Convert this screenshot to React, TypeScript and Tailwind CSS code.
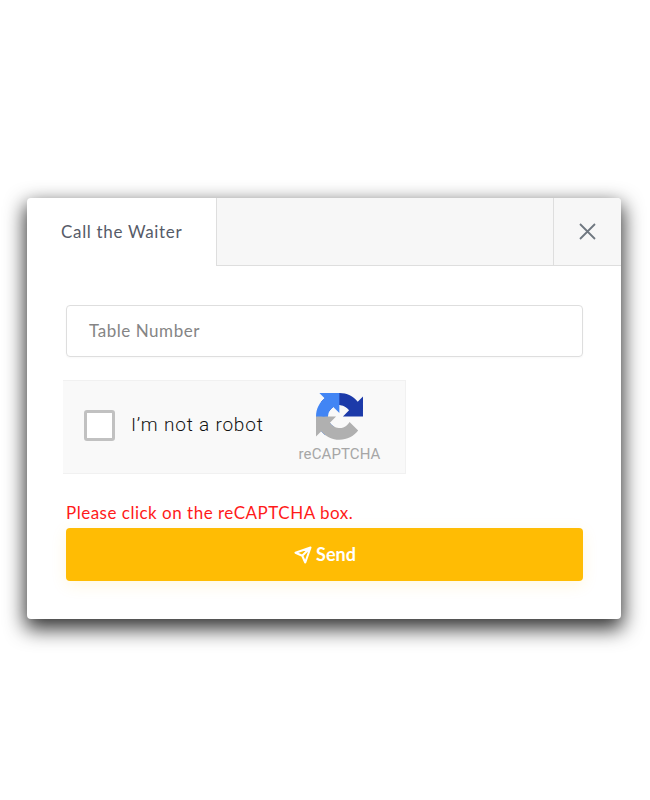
// reCAPTCHA widget mark
function RecaptchaLogo() {
  return (
    <svg className="w-[47px] h-[47px]" viewBox="0 0 64 64">
      <path d="M64 31.955l-.033-1.37V4.687l-7.16 7.16C50.948 4.674 42.033.093 32.05.093c-10.4 0-19.622 4.96-25.458 12.64l11.736 11.86a15.55 15.55 0 0 1 4.754-5.334c2.05-1.6 4.952-2.906 8.968-2.906.485 0 .86.057 1.135.163 4.976.393 9.29 3.14 11.83 7.124l-8.307 8.307c10.522-.04 22.4-.066 27.295.006" fill="#1c3aa9" />
      <path d="M31.862.001l-1.37.033H4.594l7.16 7.16C4.58 13.053 0 21.968 0 31.95c0 10.4 4.96 19.622 12.64 25.458L24.5 45.672a15.55 15.55 0 0 1-5.334-4.754c-1.6-2.05-2.906-4.952-2.906-8.968 0-.485.057-.86.163-1.135.393-4.976 3.14-9.29 7.124-11.83l8.307 8.307c-.04-10.522-.066-22.4.006-27.295" fill="#4285f4" />
      <path d="M.001 31.95l.033 1.37v25.898l7.16-7.16c5.86 7.173 14.775 11.754 24.757 11.754 10.4 0 19.622-4.96 25.458-12.64L45.672 39.5a15.55 15.55 0 0 1-4.754 5.334c-2.05 1.6-4.952 2.906-8.968 2.906-.485 0-.86-.057-1.135-.163-4.976-.393-9.29-3.14-11.83-7.124l8.307-8.307c-10.522.04-22.4.066-27.295-.006" fill="#b0b0b0" />
    </svg>
  );
}

export default function App() {
  return (
    <div className="min-h-[800px] bg-white pt-[198px] pl-[27px] font-['Lato','Noto_Sans',sans-serif]">
      <div className="w-[594px] h-[421px] bg-white rounded-[4px] overflow-hidden shadow-[0_8px_20px_2px_rgba(0,0,0,0.8)]">
        {/* Header */}
        <div className="flex h-[68px]">
          <div className="w-[190px] flex items-center pl-[34px] border-r border-[#dedede] text-[17px] tracking-[0.67px] text-[#565b68]">
            Call the Waiter
          </div>
          <div className="flex-1 bg-[#f7f7f7] border-b border-[#dedede]" />
          <button className="w-[68px] flex items-center justify-center bg-[#f7f7f7] border-l border-b border-[#dedede]">
            <svg className="w-[17px] h-[17px]" viewBox="0 0 17 17" fill="none" stroke="#6f7780" strokeWidth={1.8}>
              <path d="M1 1l15 15M16 1L1 16" />
            </svg>
          </button>
        </div>

        {/* Form */}
        <div className="pt-[39px] pl-[39px] pr-[38px]">
          <div className="h-[52px] flex items-center pl-[22px] border border-[#dedede] rounded-[4px] text-[17px] tracking-[0.55px] text-[#858585] shadow-[0_1px_2px_rgba(0,0,0,0.03)]">
            Table Number
          </div>

          <div className="-ml-[3px] mt-[23px] w-[343px] h-[94px] flex bg-[#f9f9f9] border-t border-b border-r border-[#f1f1f1]">
            <div className="ml-[21px] mt-[29px] w-[31px] h-[31px] bg-white border-[3px] border-[#c1c1c1] rounded-[3px]" />
            <div className="ml-[16px] mt-[30px] w-[168px] font-['Roboto',sans-serif] text-[19px] font-light leading-[28px] tracking-[0.8px] text-[#111111]">
              I’m not a robot
            </div>
            <div className="flex flex-col items-center mt-[12px] w-[84px] -ml-[2px]">
              <RecaptchaLogo />
              <div className="font-['Roboto',sans-serif] text-[15px] leading-[16px] mt-[6px] ml-[1px] tracking-[0.1px] text-[#a6a6a6]">reCAPTCHA</div>
            </div>
          </div>

          <div className="mt-[27px] h-[24px] text-[17px] leading-[24px] tracking-[0.5px] text-[#ff1a1a]">
            Please click on the reCAPTCHA box.
          </div>

          <button className="mt-[3px] w-full h-[53px] flex items-center justify-center gap-[4px] pl-[1px] bg-[#ffbc04] rounded-[4px] text-white text-[18px] font-bold shadow-[0_4px_16px_rgba(255,188,4,0.12)]">
            <svg className="w-[18px] h-[18px]" viewBox="0 0 24 24" fill="none" stroke="currentColor" strokeWidth={2.8} strokeLinejoin="round" strokeLinecap="round">
              <path d="M22 2L11 13M22 2l-7 20-4-9-9-4 20-7z" />
            </svg>
            Send
          </button>
        </div>
      </div>
    </div>
  );
}
